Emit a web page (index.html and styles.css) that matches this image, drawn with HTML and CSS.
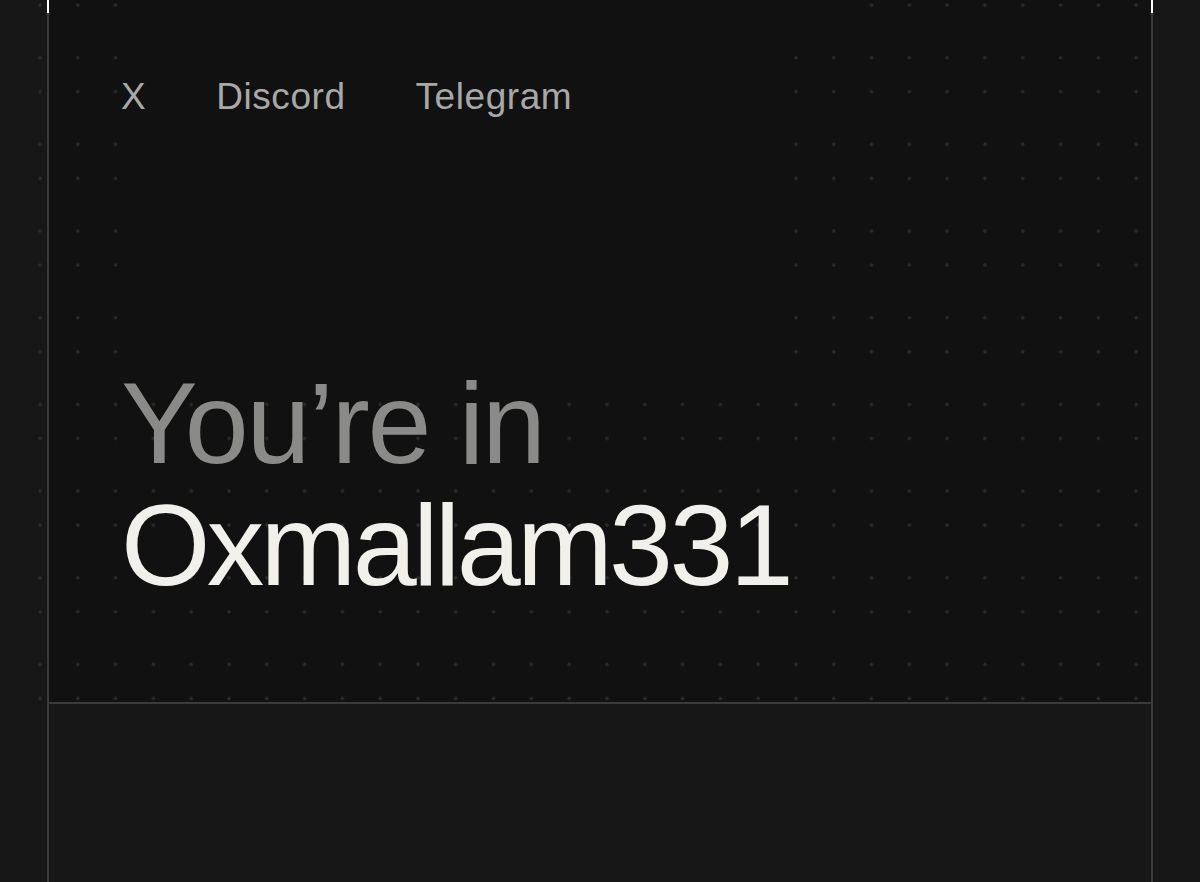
FILE: index.html
```html
<!DOCTYPE html>
<html lang="en">
<head>
<meta charset="utf-8">
<title>You're in</title>
<link rel="stylesheet" href="styles.css">
</head>
<body>
<div class="page">
  <section class="hero">
    <div class="hero-inner">
      <nav class="nav">
        <a class="nav-link" href="#">X</a>
        <a class="nav-link" href="#">Discord</a>
        <a class="nav-link" href="#">Telegram</a>
      </nav>
      <h1 class="title">
        <span class="title-muted">You’re in</span>
        <span class="title-name">Oxmallam331</span>
      </h1>
    </div>
  </section>
  <section class="lower">
    <div class="lower-inner"></div>
  </section>
</div>
</body>
</html>
```

FILE: styles.css
```css
* { box-sizing: border-box; }

html, body {
  margin: 0;
  padding: 0;
  background: #171717;
  font-family: "Liberation Sans", Arial, sans-serif;
}

.page {
  width: 1200px;
  min-height: 882px;
  display: flex;
  flex-direction: column;
}

.hero {
  position: relative;
  z-index: 0;
  height: 704px;
  display: flex;
}

/* faint dot field */
.hero::before {
  content: "";
  position: absolute;
  z-index: 0;
  top: 0;
  left: 38px;
  width: 1114px;
  height: 702px;
  background-image:
    radial-gradient(circle at 2px 5px, #2b2b2b 0, #2b2b2b 1.4px, transparent 2.1px),
    radial-gradient(circle at 2px 57.7px, #2b2b2b 0, #2b2b2b 1.4px, transparent 2.1px);
  background-size: 37.8px 86.7px, 37.8px 86.7px;
  background-repeat: repeat;
  -webkit-mask-image: linear-gradient(#000, #000), linear-gradient(#000, #000), linear-gradient(#000, #000), linear-gradient(#000, #000);
  -webkit-mask-size: 96px 100%, 360px 400px, 300px 30px, 100% 320px;
  -webkit-mask-position: 0 0, 100% 40px, 100% 0, 0 100%;
  -webkit-mask-repeat: no-repeat;
  mask-image: linear-gradient(#000, #000), linear-gradient(#000, #000), linear-gradient(#000, #000), linear-gradient(#000, #000);
  mask-size: 96px 100%, 360px 400px, 300px 30px, 100% 320px;
  mask-position: 0 0, 100% 40px, 100% 0, 0 100%;
  mask-repeat: no-repeat;
  pointer-events: none;
}

/* white corner ticks on top of the frame lines */
.hero::after {
  content: "";
  position: absolute;
  z-index: 2;
  top: 0;
  left: 47px;
  width: 2px;
  height: 13px;
  background: #ffffff;
  box-shadow: 1104px 0 0 #ffffff;
}

.hero-inner {
  flex: 1;
  margin: 0 47px;
  background: #111111;
  border-left: 2px solid #3a3a3a;
  border-right: 2px solid #3a3a3a;
  border-bottom: 2px solid #3a3a3a;
  padding: 76px 0 0 72px;
  display: flex;
  flex-direction: column;
}

.nav {
  position: relative;
  z-index: 1;
  display: flex;
  gap: 70px;
  font-size: 37px;
  line-height: 1.15;
}

.nav-link {
  color: #a8a8a8;
  text-decoration: none;
  letter-spacing: 0.015em;
}

.title {
  position: relative;
  z-index: 1;
  margin: 243px 0 0 0;
  display: flex;
  flex-direction: column;
  font-weight: 400;
  font-size: 115px;
  line-height: 122px;
}

.title-muted {
  color: #8a8a89;
  letter-spacing: -0.02em;
}

.title-name {
  color: #f2f0ea;
  letter-spacing: -0.032em;
}

.lower {
  flex: 1;
  display: flex;
  min-height: 178px;
}

.lower-inner {
  flex: 1;
  margin: 0 47px;
  background: #171717;
  border-left: 2px solid #3a3a3a;
  border-right: 2px solid #3a3a3a;
}
```
